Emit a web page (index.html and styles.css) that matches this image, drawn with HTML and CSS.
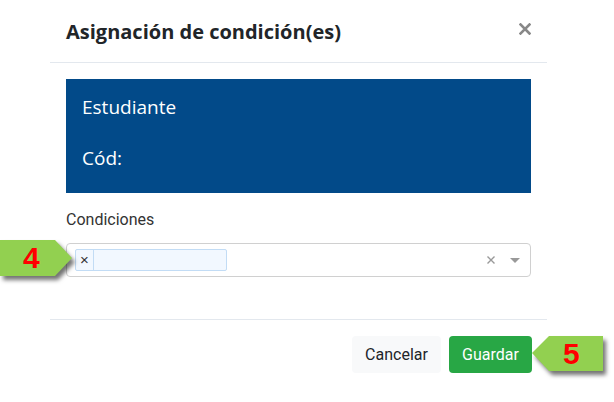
FILE: index.html
```html
<!DOCTYPE html>
<html lang="es">
<head>
<meta charset="utf-8">
<title>Asignación de condición(es)</title>
<link rel="stylesheet" href="styles.css">
</head>
<body>
<div class="modal">
  <div class="modal-header">
    <h4 class="modal-title">Asignación de condición(es)</h4>
    <button class="close" aria-label="Cerrar">
      <svg width="12" height="12" viewBox="0 0 12 12"><path d="M1.5 1.5 L10.5 10.5 M10.5 1.5 L1.5 10.5" stroke="#888" stroke-width="2.6" stroke-linecap="square"/></svg>
    </button>
  </div>
  <div class="modal-body">
    <div class="student">
      <p class="student-line first">Estudiante</p>
      <p class="student-line">Cód:</p>
    </div>
    <div class="form-group">
      <label class="form-label">Condiciones</label>
      <div class="select">
        <div class="tag">
          <span class="tag-remove">×</span>
          <span class="tag-label"></span>
        </div>
        <div class="select-spacer"></div>
        <span class="select-clear">
          <svg width="10" height="10" viewBox="0 0 10 10"><path d="M1.5 1.5 L8.5 8.5 M8.5 1.5 L1.5 8.5" stroke="#999" stroke-width="1.4"/></svg>
        </span>
        <span class="select-arrow">
          <svg width="10" height="6" viewBox="0 0 10 6"><path d="M0 0 L10 0 L5 5 Z" fill="#999"/></svg>
        </span>
      </div>
    </div>
  </div>
  <div class="modal-footer">
    <button class="btn btn-light">Cancelar</button>
    <button class="btn btn-success">Guardar</button>
  </div>
</div>

<div class="callout callout-4">
  <svg class="callout-shape" width="80" height="44" viewBox="0 0 80 44"><polygon points="0,0 55,0 72,18 55,36 0,36" fill="#92d050"/></svg>
  <span class="callout-num num-4">4</span>
</div>
<div class="callout callout-5">
  <svg class="callout-shape" width="80" height="44" viewBox="0 0 80 44"><polygon points="0,17 17,0 71,0 71,35 17,35" fill="#92d050"/></svg>
  <span class="callout-num num-5">5</span>
</div>
</body>
</html>
```
FILE: styles.css
```css
html, body {
  margin: 0;
  padding: 0;
  background: #ffffff;
}

body {
  position: relative;
  width: 614px;
  height: 402px;
  overflow: hidden;
}

.modal {
  margin-left: 50px;
  width: 497px;
  background: #ffffff;
}

.modal-header {
  display: flex;
  align-items: center;
  justify-content: space-between;
  padding: 17px 16px 16px 16px;
  height: 29px;
  border-bottom: 1px solid #e3e8ee;
}

.modal-title {
  margin: 0;
  font-family: "Open Sans", "Liberation Sans", sans-serif;
  font-weight: 700;
  font-size: 20px;
  line-height: 29px;
  color: #212529;
}

.close {
  background: none;
  border: 0;
  padding: 0;
  margin: -6px 0 0 0;
  width: 12px;
  height: 12px;
  display: flex;
}

.modal-body {
  padding: 16px 16px 42px 16px;
}

.student {
  background: #024a89;
  padding: 16px 16px 23px 16px;
}

.student-line {
  margin: 0;
  font-family: "Open Sans", "Liberation Sans", sans-serif;
  font-size: 19px;
  line-height: 24px;
  color: #ffffff;
}

.student-line.first {
  margin-bottom: 27px;
}

.form-group {
  margin-top: 16px;
}

.form-label {
  display: block;
  font-family: Roboto, "Liberation Sans", sans-serif;
  font-size: 16px;
  line-height: 21px;
  color: #333333;
  margin-bottom: 13px;
}

.select {
  display: flex;
  align-items: center;
  height: 32px;
  border: 1px solid #d0d0d0;
  border-radius: 4px;
  padding: 0 10px 0 8px;
}

.tag {
  display: flex;
  width: 150px;
  height: 20px;
  border: 1px solid #c2dcf5;
  border-radius: 2px;
  background: #f2f8ff;
}

.tag-remove {
  width: 17px;
  border-right: 1px solid #c2dcf5;
  font-family: "Liberation Sans", Arial, sans-serif;
  font-size: 15px;
  line-height: 20px;
  text-align: center;
  color: #333333;
}

.tag-label {
  flex: 1;
}

.select-spacer {
  flex: 1;
}

.select-clear {
  display: flex;
  margin-right: 14px;
}

.select-arrow {
  display: flex;
  margin-top: 2px;
}

.modal-footer {
  display: flex;
  justify-content: flex-end;
  gap: 8px;
  border-top: 1px solid #e3e8ee;
  padding: 16px 15px 15px 16px;
}

.btn {
  height: 37px;
  border: 0;
  border-radius: 4px;
  font-family: Roboto, "Liberation Sans", sans-serif;
  font-size: 16px;
  line-height: 37px;
  padding: 0;
}

.btn-light {
  background: #f8f9fa;
  color: #212529;
  width: 89px;
}

.btn-success {
  background: #28a745;
  color: #ffffff;
  width: 83px;
}

.callout {
  position: absolute;
  width: 80px;
  height: 44px;
}

.callout-shape {
  position: absolute;
  left: 0;
  top: 0;
  filter: drop-shadow(3px 4px 2px rgba(0, 0, 0, 0.55));
}

.callout-4 {
  left: 0;
  top: 240px;
}

.callout-5 {
  left: 532px;
  top: 336px;
}

.callout-num {
  position: absolute;
  font-family: "Liberation Sans", Arial, sans-serif;
  font-weight: 700;
  font-size: 30px;
  line-height: 36px;
  color: #ff0000;
}

.num-4 {
  left: 23px;
  top: 0;
}

.num-5 {
  left: 31px;
  top: 0;
}
```
